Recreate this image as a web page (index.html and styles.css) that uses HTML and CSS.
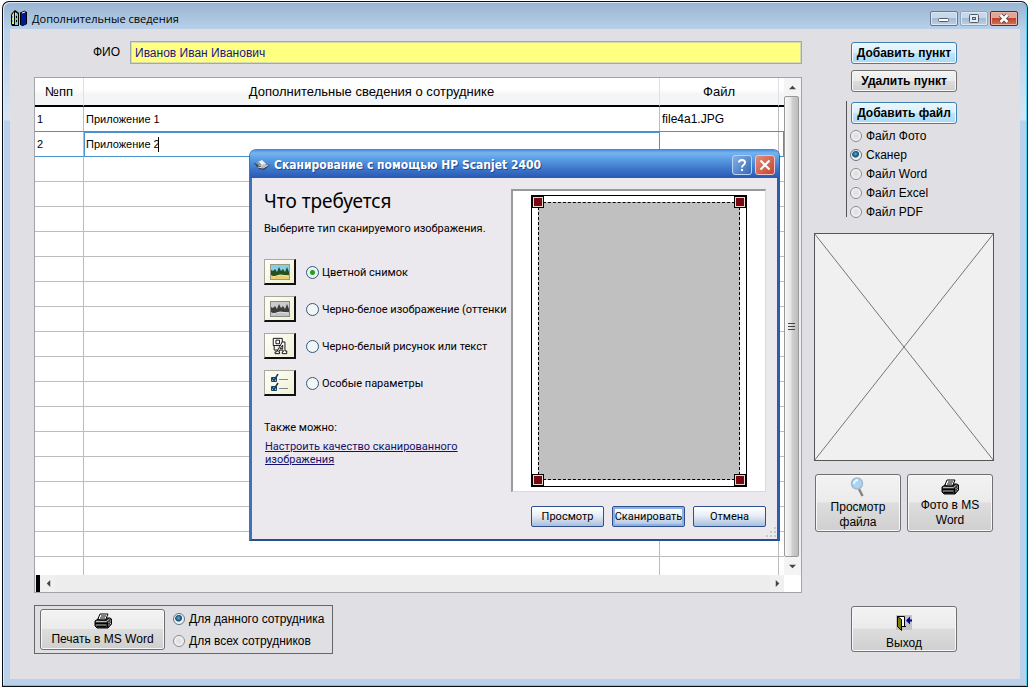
FILE: index.html
```html
<!DOCTYPE html>
<html lang="ru">
<head>
<meta charset="utf-8">
<title>Дополнительные сведения</title>
<link rel="stylesheet" href="styles.css">
</head>
<body>
<svg class="defs" aria-hidden="true">
  <symbol id="printer" viewBox="0 0 18 16">
    <path d="M6 1h8l-2.500 6h-8z" fill="#fff" stroke="#000"/>
    <path d="M7 3h5M6 5h5" stroke="#000"/>
    <path d="M1 8l3-2h1v1h7l1-2h3l1.500 1v5L14 15H3l-2-2z" fill="#3a3a3a" stroke="#000"/>
    <path d="M2 8.500h10.500l3-2.500" stroke="#b8b8b8" fill="none"/>
    <path d="M1 10.500h12M3 13.500h9" stroke="#000"/>
    <path d="M2 12h10" stroke="#8c8c8c"/>
    <path d="M13.500 9v5" stroke="#000"/>
    <path d="M15 9v1M15 11.500v1M16.500 7.500v1M16.500 10v1" stroke="#ccc"/>
  </symbol>
</svg>
<main class="window">
  <header class="titlebar">
    <svg class="app-icon" viewBox="0 0 16 16" aria-hidden="true">
      <path d="M0 5l1-2 3-3 4 3v13H1l-1-2z" fill="#000"/>
      <path d="M1 5l2-3v12H1z" fill="#e8e860"/><path d="M4 2l3 2v11H4z" fill="#d8e890"/>
      <path d="M1.500 6v2M1.500 10v2M5 15V6l1-2v11" stroke="#59b5c5" fill="none"/>
      <path d="M3.500 5v8M5.500 6v2M5.500 10v2" stroke="#000"/>
      <path d="M9 3l5-2 2 1v11l-5 3-2-2z" fill="#0018a0"/>
      <path d="M9.500 3v12M9 3l5-2M15.500 2v12l-5 2" stroke="#000" fill="none"/><path d="M11 3l3-1" stroke="#fff"/>
    </svg>
    <h1 class="title">Дополнительные сведения</h1>
    <div class="caption-buttons">
      <button class="cap" aria-label="Свернуть"><svg viewBox="0 0 26 13"><rect x="7.500" y="6.500" width="10" height="3" rx="1" fill="#fff" stroke="#525d6b"/></svg></button>
      <button class="cap cap-dim" aria-label="Развернуть"><svg viewBox="0 0 26 13"><rect x="8.500" y="2.500" width="9" height="8" rx="1" fill="#e6edf5" stroke="#525d6b"/><rect x="11.500" y="5.500" width="3" height="2" fill="#b8cee6" stroke="#525d6b"/></svg></button>
      <button class="cap cap-close" aria-label="Закрыть"><svg viewBox="0 0 26 13"><path d="M9.500 3l7 7M16.500 3l-7 7" stroke="#65444a" stroke-width="4.500"/><path d="M9.500 3l7 7M16.500 3l-7 7" stroke="#fff" stroke-width="2.500"/></svg></button>
    </div>
  </header>

  <div class="content">
    <section class="left">
      <div class="fio"><label for="fio">ФИО</label><input id="fio" value="Иванов Иван Иванович"></div>

      <div class="grid-box">
        <div class="grid-view">
          <table class="grid">
            <colgroup><col class="c-num"><col><col class="c-file"><col class="c-end"></colgroup>
            <thead><tr><th>№пп</th><th>Дополнительные сведения о сотруднике</th><th>Файл</th><th></th></tr></thead>
            <tbody>
              <tr><td>1</td><td>Приложение 1</td><td class="file">file4a1.JPG</td><td></td></tr>
              <tr class="current"><td>2</td><td class="edit"><input class="cell-input" aria-label="Сведения" value="Приложение 2"></td><td></td><td></td></tr>
              <tr><td></td><td></td><td></td><td></td></tr><tr><td></td><td></td><td></td><td></td></tr>
              <tr><td></td><td></td><td></td><td></td></tr><tr><td></td><td></td><td></td><td></td></tr>
              <tr><td></td><td></td><td></td><td></td></tr><tr><td></td><td></td><td></td><td></td></tr>
              <tr><td></td><td></td><td></td><td></td></tr><tr><td></td><td></td><td></td><td></td></tr>
              <tr><td></td><td></td><td></td><td></td></tr><tr><td></td><td></td><td></td><td></td></tr>
              <tr><td></td><td></td><td></td><td></td></tr><tr><td></td><td></td><td></td><td></td></tr>
              <tr><td></td><td></td><td></td><td></td></tr><tr><td></td><td></td><td></td><td></td></tr>
              <tr><td></td><td></td><td></td><td></td></tr><tr><td></td><td></td><td></td><td></td></tr>
              <tr><td></td><td></td><td></td><td></td></tr>
            </tbody>
          </table>
        </div>
        <div class="vbar">
          <button class="arrow" aria-label="Вверх"><svg viewBox="0 0 8 8"><path d="M0 6l4-4 4 4z" fill="#444"/></svg></button>
          <div class="thumb"><i></i><i></i><i></i></div>
          <button class="arrow" aria-label="Вниз"><svg viewBox="0 0 8 8"><path d="M0 2l4 4 4-4z" fill="#444"/></svg></button>
        </div>
        <div class="hbar">
          <span class="split"></span>
          <button class="arrow" aria-label="Влево"><svg viewBox="0 0 8 8"><path d="M6 0L2 4l4 4z" fill="#444"/></svg></button>
          <span class="track"></span>
          <button class="arrow" aria-label="Вправо"><svg viewBox="0 0 8 8"><path d="M2 0l4 4-4 4z" fill="#444"/></svg></button>
        </div>
      </div>

      <div class="print-group">
        <button class="btn btn-print"><svg class="ico"><use href="#printer"/></svg><span>Печать в MS Word</span></button>
        <div class="print-options">
          <label class="opt"><input type="radio" name="scope" checked>Для данного сотрудника</label>
          <label class="opt"><input type="radio" name="scope">Для всех сотрудников</label>
        </div>
      </div>
    </section>

    <aside class="right">
      <div class="actions">
        <button class="btn btn-short btn-blue">Добавить пункт</button>
        <button class="btn btn-short">Удалить пункт</button>
      </div>
      <div class="file-group">
        <button class="btn btn-short btn-blue">Добавить файл</button>
        <div class="file-options">
          <label class="opt"><input type="radio" name="src">Файл Фото</label>
          <label class="opt"><input type="radio" name="src" checked>Сканер</label>
          <label class="opt"><input type="radio" name="src">Файл Word</label>
          <label class="opt"><input type="radio" name="src">Файл Excel</label>
          <label class="opt"><input type="radio" name="src">Файл PDF</label>
        </div>
      </div>
      <svg class="photo" viewBox="0 0 180 228" preserveAspectRatio="none" aria-label="Нет изображения"><rect x=".5" y=".5" width="179" height="227" fill="#f0f0f0" stroke="#555"/><path d="M0 0l180 228M180 0L0 228" stroke="#555" stroke-width=".8"/></svg>
      <div class="pair">
        <button class="btn btn-tall"><svg class="ico ico-lens" viewBox="0 0 16 20" aria-hidden="true"><path d="M9 12l3.500 7" stroke="#8b8580" stroke-width="2.500"/><circle cx="7" cy="6.500" r="5.500" fill="#a9d4f4" stroke="#a7b8cd" stroke-width="1.500"/><path d="M4 7a4 4 0 0 1 4-4" stroke="#eaf8ff" stroke-width="2" fill="none"/></svg><span>Просмотр файла</span></button>
        <button class="btn btn-tall"><svg class="ico"><use href="#printer"/></svg><span>Фото в MS Word</span></button>
      </div>
      <button class="btn btn-exit"><svg class="ico ico-exit" viewBox="0 0 16 16" aria-hidden="true"><path d="M0 0h16v15H0z" fill="#c4c4c8"/><path d="M1.500 1.500h7v10h-7z" fill="#fff" stroke="#000"/><path d="M1.500 1.500l4 3v11l-4-4z" fill="#808000" stroke="#000"/><path d="M7 11.500h3" stroke="#000"/><path d="M10 5.500l4-4v3h2v2h-2v3z" fill="#000090"/></svg><span>Выход</span></button>
    </aside>
  </div>

  <section class="dialog" role="dialog" aria-labelledby="dlg-title">
    <header class="dlg-bar">
      <svg class="dlg-icon" viewBox="0 0 16 12" aria-hidden="true"><path d="M0 4h4l1 3h6l1-2 4 1-6 5-5-1z" fill="#39414e"/><path d="M4 3l4-2 4 4-4 3-4-2z" fill="#f0f2f4"/><path d="M1 4l4-1 3 3-2 1z" fill="#8d97a3"/><path d="M4 8l5 1 5-3" stroke="#dfe6ee" fill="none"/><path d="M9 5l6 1-5 3-3-1z" fill="#b7c1cc"/></svg>
      <h2 class="dlg-title" id="dlg-title">Сканирование с помощью HP Scanjet 2400</h2>
      <button class="xp xp-help" aria-label="Справка"><svg viewBox="0 0 18 18"><path d="M6 6.500Q6 4 9 4t3 2.500Q12 8 10.500 9T9 11.500M9 13v2" fill="none" stroke="#fff" stroke-width="2"/></svg></button>
      <button class="xp xp-close" aria-label="Закрыть"><svg viewBox="0 0 18 18"><path d="M4.500 4.500l9 9M13.500 4.500l-9 9" stroke="#fff" stroke-width="2.200"/></svg></button>
    </header>
    <div class="dlg-body">
      <div class="dlg-left">
        <h3 class="ask">Что требуется</h3>
        <p class="hint">Выберите тип сканируемого изображения.</p>
        <div class="kinds">
          <label class="kind"><span class="tile"><svg viewBox="0 0 20 16"><rect width="20" height="16" fill="#9a9a80"/><path d="M1 1h18v9H1z" fill="#86cdee"/><path d="M1 10h18v5H1z" fill="#e9cf74"/><path d="M1 11V6l2 1 2-2 2 3 2-5 2 4 2-2 2 3 2-5 2 5v3l-5 1-4-1-5 2z" fill="#24511d"/><path d="M3 13l7-2 8 1" stroke="#fff0b0" fill="none"/></svg></span><input type="radio" name="kind" checked><span>Цветной снимок</span></label>
          <label class="kind"><span class="tile"><svg viewBox="0 0 20 16"><rect width="20" height="16" fill="#888"/><path d="M1 1h18v9H1z" fill="#cbcbcb"/><path d="M1 10h18v5H1z" fill="#c2c2c2"/><path d="M1 11V6l2 1 2-2 2 3 2-5 2 4 2-2 2 3 2-5 2 5v3l-5 1-4-1-5 2z" fill="#3d3d3d"/><path d="M3 13l7-2 8 1" stroke="#eee" fill="none"/></svg></span><input type="radio" name="kind"><span>Черно-белое изображение (оттенки</span></label>
          <label class="kind"><span class="tile"><svg viewBox="0 0 20 20"><path d="M2.500 1.500h10v8h-10z" fill="#fff" stroke="#000"/><path d="M5.500 3.500h4v4h-4z" fill="#fff" stroke="#000"/><path d="M3.500 9.500v5h6" fill="none" stroke="#000"/><path d="M12.500 5.500h3v10h2v3h-5v-2h1v-2h-4l-1 2h1v2h-5v-2h2z" fill="#fff" stroke="#000"/><path d="M13 9l-3 4h3z" fill="#fff" stroke="#000"/></svg></span><input type="radio" name="kind"><span>Черно-белый рисунок или текст</span></label>
          <label class="kind"><span class="tile"><svg viewBox="0 0 20 18"><path d="M1.500 3.500h5v4h-5zM1.500 12.500h5v4h-5z" fill="#a7c7d8" stroke="#174664"/><path d="M2 4l2 2.500L8 0M2 13l2 2.500L8 9" stroke="#123b60" stroke-width="1.500" fill="none"/><path d="M9 6l1-1 1 1 1-1 1 1 1-1 1 1 1-1 1 1 1-1M9 15l1-1 1 1 1-1 1 1 1-1 1 1 1-1 1 1 1-1" stroke="#7d8792" fill="none"/></svg></span><input type="radio" name="kind"><span>Особые параметры</span></label>
        </div>
        <p class="also">Также можно:</p>
        <a class="link" href="#quality">Настроить качество сканированного изображения</a>
      </div>
      <div class="dlg-right">
        <div class="preview">
          <div class="paper">
            <div class="selection"></div>
            <i class="handle tl"></i><i class="handle tr"></i><i class="handle bl"></i><i class="handle br"></i>
          </div>
        </div>
        <div class="dlg-buttons">
          <button class="xbtn">Просмотр</button>
          <button class="xbtn xbtn-default">Сканировать</button>
          <button class="xbtn">Отмена</button>
        </div>
      </div>
    </div>
    <svg class="grip" viewBox="0 0 11 11" aria-hidden="true"><path d="M8 0h2v2H8zM4 4h2v2H4zM8 4h2v2H8zM0 8h2v2H0zM4 8h2v2H4zM8 8h2v2H8z" fill="#cbc8c8"/></svg>
  </section>
</main>
</body>
</html>
```
FILE: styles.css
```css
* { box-sizing: border-box; }
body {
  margin: 0;
  padding: 1px 1px 1px 2px;
  min-height: 100vh;
  display: flex;
  background: #fff;
  font: 12px/15px "Liberation Sans", Arial, sans-serif;
  color: #000;
}
h1, h2, h3, p { margin: 0; font-weight: normal; }
button, input { font: inherit; color: inherit; margin: 0; }
button { padding: 0; }
svg { display: block; }
.defs { position: absolute; width: 0; height: 0; }

.window {
  position: relative;
  flex: 1;
  display: flex;
  flex-direction: column;
  border: 1px solid #0c1014;
  border-right-color: #1c3038;
  border-radius: 7px 7px 0 0;
  padding: 0 7px 7px;
  background: linear-gradient(#99b4d1, #b9d1ea 28px, #d5e5f6 118px, #b9d1ea 119px);
  box-shadow: inset -1px -1px #4fd0ec, inset 1px 1px #dceafa;
}
.titlebar { display: flex; height: 27px; padding: 0 2px 0 1px; }
.app-icon { width: 16px; height: 16px; margin-top: 8px; }
.title { flex: 1; margin: 9px 0 0 5px; font: 11px/16px "Open Sans", "Noto Sans", sans-serif; }
.caption-buttons { display: flex; gap: 2px; margin-top: 9px; height: 15px; }
.cap {
  width: 28px;
  border: 1px solid #64768c;
  border-radius: 2px;
  background: linear-gradient(#c9d8e9 45%, #a4bad3 50%, #bdd2e8);
  box-shadow: inset 0 0 0 1px #dce8f4;
}
.cap-dim { border-color: #8da4bf; }
.cap-close { border-color: #6d2424; background: linear-gradient(#e0a797 45%, #bf4431 50%, #d47550); box-shadow: inset 0 0 0 1px #e9b5a5; }
.cap svg { width: 26px; height: 13px; }

.content {
  flex: 1;
  display: grid;
  grid-template-columns: 1fr 180px;
  gap: 12px;
  padding: 12px 26px 25px 24px;
  background: #e0dfe4;
}
.left, .right { display: flex; flex-direction: column; min-width: 0; }
.fio { display: flex; align-items: center; gap: 10px; }
.fio label { width: 86px; text-align: right; }
.fio input {
  flex: 1;
  height: 23px;
  padding: 0 4px;
  border: 1px solid #a0a8b4;
  background: #ffff80;
  color: #1c1490;
  box-shadow: inset 0 0 0 1px #d8dbae;
}

.grid-box {
  flex: 1 1 0;
  min-height: 0;
  display: grid;
  grid-template: minmax(0, 1fr) 17px / minmax(0, 1fr) 17px;
  margin: 13px 0 12px;
  border: 1px solid #a2a4aa;
  background: #fff;
}
.grid-view { overflow: hidden; }
.grid { width: 100%; border-collapse: separate; border-spacing: 0; table-layout: fixed; }
.c-num { width: 49px; }
.c-file { width: 119px; }
.c-end { width: 5px; }
.grid th {
  height: 29px;
  padding: 0;
  font-weight: normal;
  font-size: 13px;
  border-right: 1px solid #dfe0e3;
  border-bottom: 2px solid #000;
  background: linear-gradient(#fff 40%, #f4f5f7 60%);
}
.grid th:last-child, .grid td:last-child { border-right: 0; }
.grid td {
  height: 25px;
  padding: 0 2px;
  font-size: 11px;
  white-space: nowrap;
  border-right: 1px solid #bcbcbc;
  border-bottom: 1px solid #bcbcbc;
}
.grid .file { font-size: 12px; }
.grid .current td { border-bottom-color: #4a92cf; box-shadow: 0 -1px #4a92cf; }
.grid .current td:last-child { border-right: 1px solid #4a92cf; }
.grid .edit { border: 1px solid #4a92cf; padding: 0 1px; box-shadow: 0 -1px #4a92cf; }
.cell-input { width: 73px; height: 15px; padding: 0; border: 0; border-right: 1px solid #000; background: #fff; }

.arrow { border: 0; background: #f4f4f4; display: grid; place-items: center; }
.arrow svg { width: 7px; height: 7px; }
.vbar { display: flex; flex-direction: column; background: #f0f0f0; }
.vbar .arrow { height: 18px; }
.thumb {
  flex: 1;
  margin: 0 2px 0 0;
  border: 1px solid #999;
  border-radius: 2px;
  background: linear-gradient(90deg, #f7f7f7, #e6e6e6 45%, #cfcfd1 55%, #bdbdc0);
  display: flex;
  flex-direction: column;
  gap: 2px;
  align-items: center;
  justify-content: center;
}
.thumb i { width: 7px; height: 1px; background: #444; }
.hbar { display: flex; background: #ededed; }
.hbar .arrow { width: 14px; background: #f0f0f0; }
.split { width: 5px; margin-left: 1px; background: #000; border-right: 1px solid #eee; }
.track { flex: 1; }

.btn {
  display: flex;
  flex-direction: column;
  align-items: center;
  justify-content: center;
  border: 1px solid #707070;
  border-radius: 3px;
  background: linear-gradient(#f3f3f3, #ebebeb 48%, #dddddd 50%, #cfcfcf);
  box-shadow: inset 0 0 0 1px #f8f8f8;
}
.btn-short { width: 106px; height: 22px; font-weight: bold; }
.btn-blue { border-color: #3c7fb1; background: linear-gradient(#eaf6fd, #d9f0fc 48%, #bee6fd 50%, #a7d9f5); }
.ico { width: 18px; height: 16px; }

.print-group {
  align-self: flex-start;
  display: flex;
  gap: 8px;
  padding: 3px 8px 3px 5px;
  border: 1px solid #666;
}
.print-group .btn { width: 125px; height: 41px; gap: 3px; }
.print-options { display: flex; flex-direction: column; gap: 6px; padding-top: 2px; }
.opt { display: flex; align-items: center; gap: 4px; height: 16px; white-space: nowrap; }
input[type="radio"] {
  appearance: none;
  width: 12px;
  height: 12px;
  flex: none;
  border: 1px solid #8a8c90;
  border-radius: 50%;
  background: radial-gradient(#dcdcde, #f8f8f8);
  box-shadow: inset 0 0 0 1px #f5f5f5;
}
.opt input:checked { background: radial-gradient(circle at 45% 40%, #58b5dc, #12476e 3px, #e8eef2 4px); border-color: #647482; }

.actions { display: flex; flex-direction: column; gap: 6px; margin: 1px 0 9px 37px; }
.file-group { margin-left: 32px; padding: 1px 0 0 4px; border-left: 1px solid #555; height: 116px; }
.file-options { display: flex; flex-direction: column; gap: 3px; margin-top: 4px; margin-left: -1px; }
.photo { width: 100%; height: 228px; margin: 16px 0 13px; }
.pair { display: grid; grid-template-columns: 1fr 1fr; gap: 6px; padding: 0 1px; }
.btn-tall { height: 58px; padding: 0 8px; gap: 3px; }
.ico-lens { width: 16px; height: 20px; }
.btn-exit { width: 106px; height: 46px; margin: auto 0 2px 37px; padding-top: 7px; gap: 5px; }
.ico-exit { width: 16px; height: 16px; }

.dialog {
  position: absolute;
  left: 246px;
  top: 147px;
  width: 531px;
  height: 392px;
  display: flex;
  flex-direction: column;
  border: 3px solid #2f5fae;
  border-color: #4e83cd #2c5cab #24508f #4072b8;
  border-top-width: 1px;
  border-bottom-width: 2px;
  border-radius: 7px 7px 0 0;
  background: #ebe8ee;
  font: 11px/13px Roboto, "Noto Sans", sans-serif;
}
.dlg-bar {
  display: flex;
  align-items: center;
  height: 28px;
  flex: none;
  margin: 0 -2px;
  padding: 2px 4px 0 4px;
  border-radius: 5px 5px 0 0;
  background: linear-gradient(#4a92e0, #78b4ee 3px, #5a9de4 9px, #3b76cb 19px, #2b58b2);
}
.dlg-icon { width: 16px; height: 12px; }
.dlg-title { flex: 1; margin-left: 4px; font: bold 12px/16px "DejaVu Sans Condensed", "Noto Sans", sans-serif; color: #fff; text-shadow: 1px 1px #24498c; white-space: nowrap; }
.xp { width: 20px; height: 20px; margin-left: 3px; border: 1px solid #b9d2f2; border-radius: 3px; background: linear-gradient(135deg, #87b1e5, #3469b9); }
.xp-close { background: linear-gradient(135deg, #e58b79, #c34631); border-color: #efc3c3; }
.xp svg { width: 18px; height: 18px; }
.dlg-body { flex: 1; display: grid; grid-template-columns: minmax(0, 1fr) 255px; gap: 11px; padding: 11px 11px 0 12px; }
.ask { font: 19px/24px "Noto Sans", "Open Sans", sans-serif; }
.hint { margin-top: 9px; white-space: nowrap; }
.kinds { display: flex; flex-direction: column; gap: 11px; margin-top: 24px; }
.kind { display: flex; align-items: center; height: 26px; white-space: nowrap; }
.tile {
  flex: none;
  display: grid;
  place-items: center;
  width: 32px;
  height: 26px;
  border: 1px solid #a9a99a;
  border-right: 2px solid #111;
  border-bottom: 2px solid #111;
  background: linear-gradient(135deg, #fffffa, #f0f0d4);
}
.tile svg { width: 20px; height: 18px; }
.kind input[type="radio"] { width: 13px; height: 13px; margin: 0 3px 0 10px; border-color: #2c5a80; background: #f4f6f6; }
.kind input[type="radio"]:checked { background: radial-gradient(#2a9a2a 2px, #e6f2e6 3px); }
.also { margin-top: 25px; }
.link { display: block; margin: 6px 0 0 1px; width: 210px; color: #12126e; }
.preview { height: 303px; padding: 4px 18px 3px; border: 2px solid #9a9a9a; border-right: 1px solid #dcdad8; border-bottom: 1px solid #dcdad8; background: #fff; }
.paper { position: relative; height: 292px; padding: 6px; border: 1px solid #000; }
.selection { height: 100%; border: 1px dashed #000; background: #c0c0c0; }
.handle { position: absolute; width: 12px; height: 12px; border: 1px solid #000; background: #780810; box-shadow: inset 0 0 0 1px #e8d8d0; }
.tl { left: 0; top: 0; }
.tr { right: 0; top: 0; }
.bl { left: 0; bottom: 0; }
.br { right: 0; bottom: 0; }
.dlg-buttons { display: grid; grid-template-columns: repeat(3, 1fr); gap: 8px; margin: 14px 0 0 20px; }
.xbtn { height: 21px; border: 1px solid #2d4f8d; border-radius: 2px; background: linear-gradient(#fff, #e8eef7 45%, #a9bfdc); white-space: nowrap; }
.xbtn-default { box-shadow: inset 0 0 0 2px #8fb0e2; }
.grip { position: absolute; right: 0; bottom: 1px; width: 11px; height: 11px; }
```
